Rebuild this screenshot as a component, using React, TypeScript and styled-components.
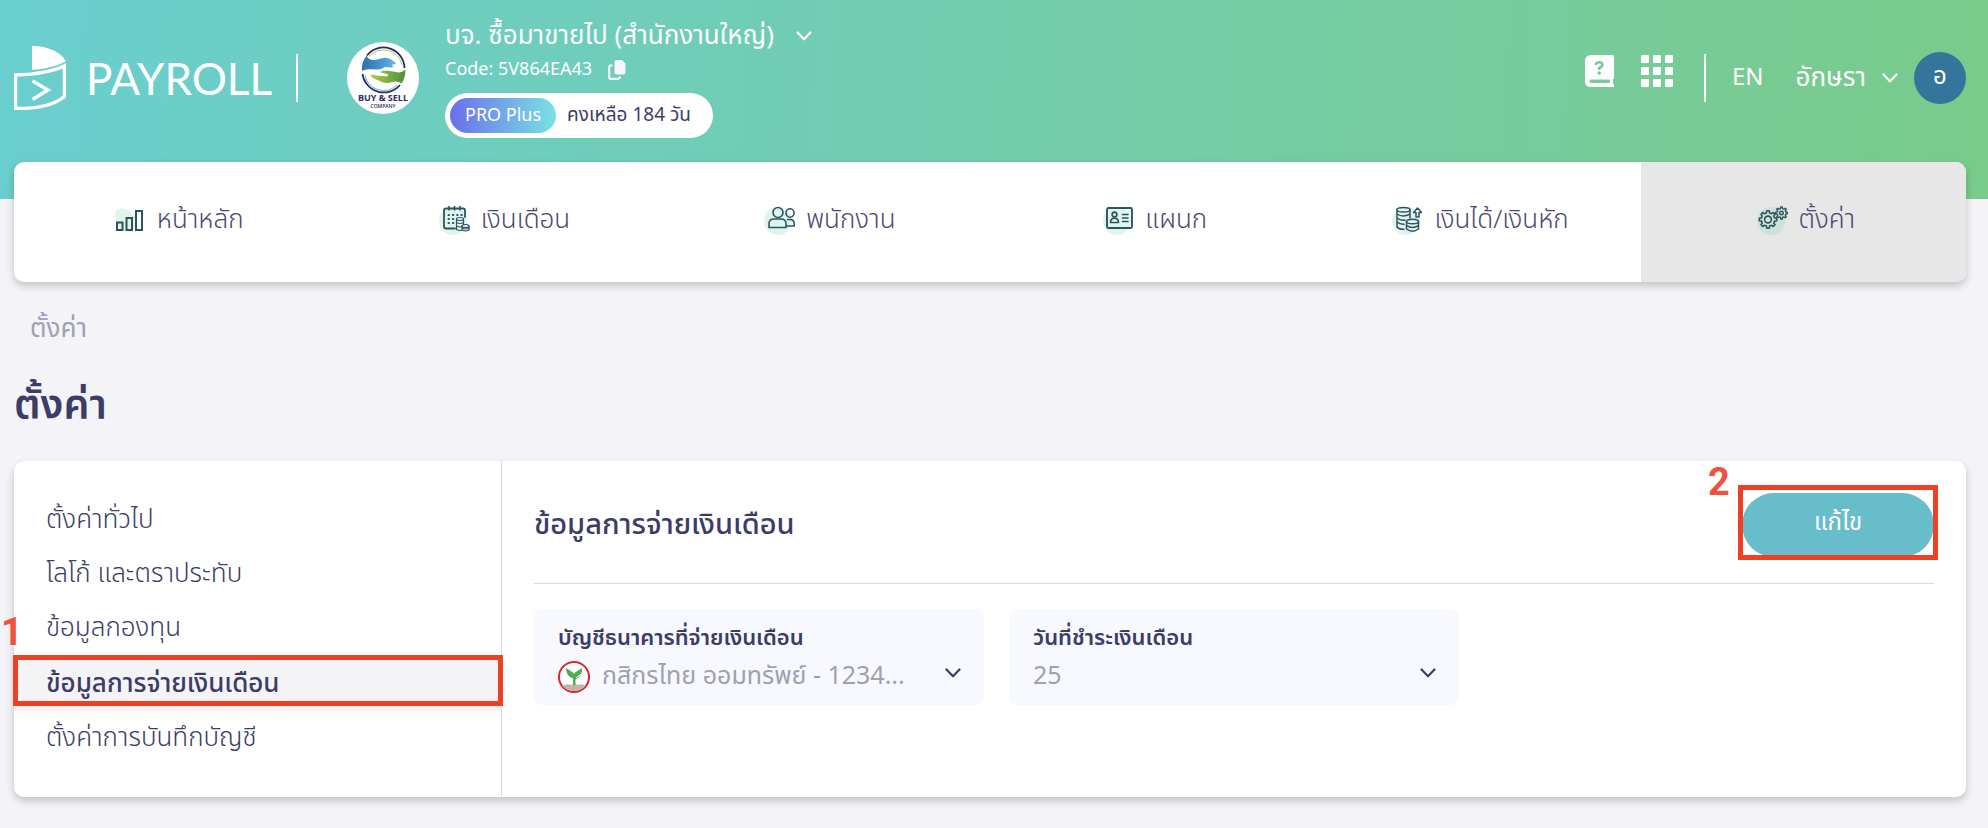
import React from "react";
import styled, { createGlobalStyle, css } from "styled-components";

const fontStack = `"Noto Sans Thai", "Noto Sans", sans-serif`;

const GlobalStyle = createGlobalStyle`
  *, *::before, *::after { box-sizing: border-box; }
  body {
    margin: 0;
    background: #f3f3f8;
    color: #3c3c66;
    font-family: ${fontStack};
    font-size: 24px;
    font-weight: 400;
  }
  button, select { font: inherit; color: inherit; }
  h1, h2, p { margin: 0; }
`;

const Page = styled.div`
  padding-bottom: 31px;
`;

const Header = styled.header`
  display: flex;
  align-items: flex-start;
  height: 199px;
  padding: 0 22px 0 14px;
  color: #fff;
  background: linear-gradient(94deg, #6bcecf 0%, #6fcdb9 32%, #79cb8b 100%);
`;

const Brand = styled.a`
  display: flex;
  align-items: center;
  gap: 20px;
  height: 64px;
  margin-top: 46px;
  color: inherit;
  text-decoration: none;
`;

const Wordmark = styled.span`
  width: 190px;
  font-family: Lato, sans-serif;
  font-size: 44px;
  font-weight: 400;
  line-height: 64px;
`;

const Rule = styled.span`
  flex: none;
  width: 2px;
  height: 48px;
  background: #fff;
`;

const ToolRule = styled(Rule)`
  margin-left: 31px;
`;

const CompanyLogo = styled.svg`
  flex: none;
  width: 72px;
  height: 72px;
  margin: 42px 26px 0 49px;
`;

const Company = styled.div`
  display: flex;
  flex-direction: column;
  align-items: flex-start;
  padding-top: 16px;
`;

const PlainButton = styled.button`
  display: flex;
  align-items: center;
  padding: 0;
  border: 0;
  background: none;
  cursor: pointer;
`;

const CompanyButton = styled(PlainButton)`
  gap: 22px;
  height: 40px;
  font-size: 26px;
  line-height: 40px;
`;

const CodeRow = styled.div`
  display: flex;
  align-items: center;
  gap: 16px;
  height: 28px;
  font-size: 18px;
  line-height: 30px;
`;

const Plan = styled.div`
  display: flex;
  align-items: center;
  gap: 11px;
  height: 45px;
  margin-top: 9px;
  padding: 5px 22px 5px 5px;
  border-radius: 23px;
  background: #fff;
  color: #3c3c66;
  font-size: 19px;
  line-height: 35px;
`;

const PlanName = styled.span`
  padding: 0 15px;
  border-radius: 18px;
  background: linear-gradient(90deg, #6b6eec, #79e2e4);
  color: #fff;
  font-size: 18px;
`;

const Tools = styled.div`
  display: flex;
  align-items: center;
  height: 52px;
  margin: 52px 0 0 auto;
`;

const ToolButton = styled(PlainButton)`
  align-self: flex-start;
  margin: 3px 0 0 27px;
`;

const LangButton = styled(PlainButton)`
  margin-left: 26px;
`;

const UserButton = styled(PlainButton)`
  gap: 16px;
  margin-left: 32px;
  font-size: 26px;
`;

const Avatar = styled.span`
  width: 52px;
  height: 52px;
  border-radius: 50%;
  background: #35749b;
  font-size: 24px;
  line-height: 50px;
  text-align: center;
`;

const card = css`
  border-radius: 10px;
  background: #fff;
  box-shadow: 0 4px 8px rgba(0, 0, 0, 0.2);
`;

const Nav = styled.nav`
  ${card}
  position: relative;
  display: grid;
  grid-template-columns: repeat(6, 1fr);
  height: 120px;
  margin: -37px 22px 0 14px;
  overflow: hidden;
`;

const NavLink = styled.a<{ $active?: boolean }>`
  display: flex;
  align-items: center;
  justify-content: center;
  gap: 11px;
  padding: 0 0 4px 4px;
  background: ${(p) => (p.$active ? "#e7e7e7" : "transparent")};
  color: #4a4872;
  font-size: 26px;
  font-weight: 300;
  text-decoration: none;
  line-height: 40px;

  svg { flex: none; }
`;

const Crumb = styled.nav`
  padding: 27px 30px 0;
  font-size: 26px;
  line-height: 40px;

  a { color: #a09fb4; text-decoration: none; }
`;

const Title = styled.h1`
  padding: 30px 14px 0;
  font-size: 41px;
  font-weight: 600;
  line-height: 54px;
`;

const Panel = styled.main`
  ${card}
  display: grid;
  grid-template-columns: 1fr 3fr;
  min-height: 336px;
  margin: 28px 22px 0 14px;
`;

const Side = styled.nav`
  display: flex;
  flex-direction: column;
  padding: 32px 0;
  border-right: 1px solid #d9d9e6;
`;

const SideLink = styled.a<{ $active?: boolean }>`
  position: relative;
  height: ${(p) => (p.$active ? 56 : 54)}px;
  padding-left: 32px;
  background: ${(p) => (p.$active ? "#f4f4f7" : "transparent")};
  color: inherit;
  font-size: 26px;
  font-weight: ${(p) => (p.$active ? 500 : 300)};
  line-height: ${(p) => (p.$active ? 58 : 54)}px;
  text-decoration: none;
`;

const SideMark = styled.span`
  position: absolute;
  inset: 0 -2px 5px -1px;
  border: 5px solid #ec4125;
`;

const StepNumber = styled.span`
  position: absolute;
  color: #ef5340;
  font-family: Roboto, Arial, sans-serif;
  font-size: 38px;
  font-weight: 700;
  line-height: 38px;
`;

const StepOne = styled(StepNumber)`
  top: -42px;
  left: -13px;
`;

const StepTwo = styled(StepNumber)`
  top: -30px;
  left: -34px;
`;

const Content = styled.section`
  padding: 32px 32px 92px;
`;

const ContentHead = styled.div`
  display: flex;
  align-items: center;
  justify-content: space-between;
  height: 91px;
  padding-bottom: 27px;
  border-bottom: 1px solid #d9d9e6;
`;

const SectionTitle = styled.h2`
  font-size: 29px;
  font-weight: 500;
  line-height: 40px;
`;

const EditWrap = styled.div`
  position: relative;
`;

const EditButton = styled.button`
  display: block;
  width: 192px;
  height: 64px;
  padding: 0 0 3px;
  border: 0;
  border-radius: 32px;
  background: #67bdc9;
  color: #fff;
  font-size: 24px;
  cursor: pointer;
`;

const EditMark = styled.span`
  position: absolute;
  inset: -8px -4px -3px;
  border: 5px solid #ec4125;
  pointer-events: none;
`;

const Fields = styled.div`
  display: grid;
  grid-template-columns: repeat(3, 1fr);
  gap: 25px;
  margin-top: 25px;
`;

const Field = styled.div`
  height: 96px;
  padding: 12px 23px 0 24px;
  border-radius: 8px;
  background: #f8f9fe;
`;

const FieldLabel = styled.label`
  display: block;
  font-size: 22px;
  font-weight: 600;
  line-height: 36px;
`;

const FieldRow = styled.div`
  display: flex;
  align-items: center;
  gap: 12px;
  height: 40px;

  > svg:last-child { margin-bottom: 8px; }
`;

const Select = styled.select`
  flex: 1;
  min-width: 0;
  height: 40px;
  padding: 0 0 2px;
  border: 0;
  appearance: none;
  background: transparent;
  color: #a09fb4;
  font-size: 25px;
  line-height: 38px;
`;

const Chevron = () => (
  <svg width="16" height="10" viewBox="0 0 16 10" fill="none" stroke="currentColor" strokeWidth="2.2" strokeLinecap="round" strokeLinejoin="round" aria-hidden="true">
    <path d="M1.5 1.5 8 8.3l6.5-6.8" />
  </svg>
);

const BrandMark = () => (
  <svg width="52" height="64" viewBox="14 46 52 64" aria-hidden="true">
    <path d="M32 46C48 46 61 52 66 61.500Q52 68.500 32 70Z" fill="#fff" />
    <path d="M15.500 75Q48 74 64.500 65.700V96.500Q50 108.800 15.500 108.500Z" fill="none" stroke="#fff" strokeWidth="3.400" />
    <path d="M32.500 81 48 90 32.500 99.500" fill="none" stroke="#fff" strokeWidth="3.400" />
  </svg>
);

const BuySell = () => (
  <CompanyLogo viewBox="0 0 72 72" role="img" aria-label="Buy & Sell Company">
    <defs>
      <linearGradient id="blueHand"><stop stopColor="#2c6eb0" /><stop offset="1" stopColor="#5fb5e6" /></linearGradient>
      <linearGradient id="greenHand"><stop stopColor="#a9cc4e" /><stop offset="1" stopColor="#4f8f3a" /></linearGradient>
    </defs>
    <circle cx="36" cy="36" r="36" fill="#fff" />
    <path d="M20 13.500A21 21 0 0 1 57.500 26" fill="none" stroke="#2b2a63" strokeWidth="1.800" />
    <path d="M15.500 32A21.500 21.500 0 0 0 53 43" fill="none" stroke="#2b2a63" strokeWidth="1.800" />
    <path d="M22 14.500A19 19 0 0 1 55 23" fill="none" stroke="#a8cf62" strokeWidth="1" />
    <path d="M18 33A19 19 0 0 0 50 43" fill="none" stroke="#62b4e4" strokeWidth="1" />
    <path d="M19.500 13.500C21 17 24 18.500 28 18L36 16Q40 15 44 17.500L49 21Q48 23 44.500 22.500 48 25 44 25.500L38 25Q34 28 28 27.500C22 27 17 27.500 15 29Q14 21 19.500 13.500Z" fill="url(#blueHand)" />
    <path d="M58.500 27.500C54 31.500 50 30.500 46 29.500L39 28.500Q34 28.500 33.500 30.500L40 32Q43 33.500 39 34.500L30 33.500 24 32.500Q23.500 35 28 37L36 40.500Q41 41.500 45 40 50 38.500 54.500 41.500Q58.500 36 58.500 27.500Z" fill="url(#greenHand)" />
    <text x="36" y="59" textAnchor="middle" fill="#2b2a63" fontFamily="Open Sans, sans-serif" fontWeight="700" fontSize="9">BUY &amp; SELL</text>
    <text x="36" y="65.500" textAnchor="middle" fill="#2b2a63" fontFamily="Open Sans, sans-serif" fontWeight="600" fontSize="5">COMPANY</text>
  </CompanyLogo>
);

const CopyIcon = () => (
  <svg width="18" height="20" viewBox="0 0 18 20" aria-hidden="true">
    <path d="M8.500 0H14l3.500 3.500V12.500a2 2 0 0 1-2 2h-7a2 2 0 0 1-2-2V2a2 2 0 0 1 2-2Z" fill="#f4f6f8" />
    <path d="M4.500 5.500H3A1.500 1.500 0 0 0 1.200 7V17A1.500 1.500 0 0 0 3 18.800H10A1.500 1.500 0 0 0 11.700 17V16.200" fill="none" stroke="#f4f6f8" strokeWidth="2.200" />
  </svg>
);

const BookIcon = () => (
  <svg width="29" height="32" viewBox="0 0 29 32" aria-hidden="true">
    <path fill="#fff" fillRule="evenodd" d="M6 0H27.500Q29 0 29 1.500V22.500Q29 24 28 24.300V28.500Q29 28.800 29 30V32H6Q0 32 0 26V6Q0 0 6 0ZM6 24.500Q4.500 24.500 4.500 26.200T6 28H25V24.500Z" />
    <path d="M10.800 10Q11 7.300 14.300 7.300 17.300 7.300 17.300 10 17.300 12 14.200 13V15" fill="none" stroke="#77cb98" strokeWidth="2.600" />
    <circle cx="14.200" cy="18" r="1.800" fill="#77cb98" />
  </svg>
);

const GridIcon = () => (
  <svg width="32" height="32" viewBox="0 0 32 32" fill="#fff" aria-hidden="true">
    {[0, 12, 24].map((y) => [0, 12, 24].map((x) => <rect key={`${x}-${y}`} x={x} y={y} width="8" height="8" rx="1" />))}
  </svg>
);

const Glyph = ({ children, blob = true }: { children: React.ReactNode; blob?: boolean }) => (
  <svg width="32" height="30" viewBox="0 0 32 30" fill="none" stroke="#2d5560" strokeWidth="1.600" strokeLinejoin="round" strokeLinecap="round" aria-hidden="true">
    <defs>
      <linearGradient id="blob" x1="0" x2="1"><stop stopColor="#7acb8a" /><stop offset="1" stopColor="#67cfd6" /></linearGradient>
    </defs>
    {blob && <circle cx="15" cy="16" r="14" fill="url(#blob)" fillOpacity="0.220" stroke="none" />}
    {children}
  </svg>
);

const HomeGlyph = () => (
  <Glyph blob={false}>
    <path d="M1 10C1 5 5 3 9 3.500 15 4 17 9 20 11 25 15 22 27 15 27 6 27 1 20 1 10Z" fill="#7acb8a" fillOpacity="0.220" stroke="none" />
    <path d="M3 17.500H8.500V25H3ZM12.500 13H18V25H12.500ZM22 6H28V25H22Z" strokeWidth="2" strokeLinejoin="miter" />
  </Glyph>
);

const CalendarGlyph = () => (
  <Glyph>
    <path d="M17 23.500H8Q6 23.500 6 21.500V5.500Q6 3.500 8 3.500H25Q27 3.500 27 5.500V12" strokeWidth="1.800" />
    <path d="M11 1.500V5M16.500 1.500V5M22 1.500V5" />
    <path d="M10.500 10H24M10.500 14H18M10.500 18H17" strokeDasharray="0.500 3.800" strokeWidth="2" />
    <g fill="#e8f5f3" strokeWidth="1.200">
      <path d="M18.500 14V24.500Q22 26.500 25.500 24.500V14" />
      <ellipse cx="22" cy="14" rx="3.600" ry="1.500" />
      <path d="M18.500 17.500Q22 19.500 25.500 17.500M18.500 21Q22 23 25.500 21" />
      <path d="M24 21V25Q27.500 27 31 25V21" />
      <ellipse cx="27.500" cy="21" rx="3.500" ry="1.500" />
      <path d="M24 23Q27.500 25 31 23" />
    </g>
  </Glyph>
);

const UsersGlyph = () => (
  <Glyph>
    <ellipse cx="15" cy="7.500" rx="5" ry="5" />
    <path d="M6 22.500V19Q6 14 11 14H18Q23 14 23 19V22.500Z" />
    <ellipse cx="27" cy="8" rx="4" ry="4.200" />
    <path d="M24.500 14.500H28Q31.200 15 31.200 19V21H23.500" />
  </Glyph>
);

const CardGlyph = () => (
  <Glyph>
    <rect x="5" y="3" width="25" height="20" rx="1.500" strokeWidth="1.900" />
    <circle cx="12.500" cy="9.500" r="2.400" />
    <path d="M8.500 17.500Q8.500 13.200 12.500 13.200T16.500 17.500ZM20.500 9.500H26M20.500 13H26M20.500 16.500H26" />
  </Glyph>
);

const CoinsGlyph = () => (
  <Glyph>
    <g strokeWidth="1.500">
      <ellipse cx="12.500" cy="4.800" rx="6.500" ry="2.300" />
      <path d="M6 5V22Q8 24.500 13 24.300M19 5V13M6 9Q12 13 19 9M6 13Q10 16 14 15M6 17Q9 19.500 13 19.300" />
      <ellipse cx="21.500" cy="16.500" rx="6" ry="2.300" />
      <path d="M15.500 16.500V24Q21.500 28.500 27.500 24V16.500M15.500 20.300Q21.500 24.500 27.500 20.300" />
      <path d="M25 12V7.500H22.500L26.500 3 30.500 7.500H28V12Z" />
    </g>
  </Glyph>
);

const gearPath = (cx: number, cy: number, r: number, tooth: number, teeth: number) => {
  const pts: string[] = [];
  for (let i = 0; i < teeth; i++) {
    [[-0.3, r], [-0.17, r + tooth], [0.17, r + tooth], [0.3, r]].forEach(([t, radius]) => {
      const a = ((i + t) / teeth) * Math.PI * 2;
      pts.push(`${(cx + Math.cos(a) * radius).toFixed(1)} ${(cy + Math.sin(a) * radius).toFixed(1)}`);
    });
  }
  return `M${pts.join("L")}Z`;
};

const GearsGlyph = () => (
  <Glyph>
    <path d={gearPath(12, 14.5, 6.8, 2, 8)} />
    <circle cx="12" cy="14.500" r="3.400" />
    <path d={gearPath(25.5, 8, 4.4, 1.7, 8)} strokeWidth="1.400" />
    <circle cx="25.500" cy="8" r="1.800" strokeWidth="1.400" />
  </Glyph>
);

const BankIcon = () => (
  <svg width="32" height="32" viewBox="0 0 32 32" aria-hidden="true">
    <circle cx="16" cy="16" r="15" fill="#fff" stroke="#d9272e" strokeWidth="2" />
    <path d="M4.500 25Q9 22 13 24L16 22.500 20 24Q24 22 27.500 25 23 30 16 30T4.500 25Z" fill="#bdb5ad" />
    <path d="M15 24V17.500Q8 15 8 7L15 11.500Q16 14 17 11.500L24 7Q24.500 16 17.500 18.500V24Z" fill="#4caf50" />
    <path d="M18 17 24 12.500" stroke="#fff" strokeWidth="1" />
  </svg>
);

const navItems = [
  { label: "หน้าหลัก", icon: <HomeGlyph /> },
  { label: "เงินเดือน", icon: <CalendarGlyph /> },
  { label: "พนักงาน", icon: <UsersGlyph /> },
  { label: "แผนก", icon: <CardGlyph /> },
  { label: "เงินได้/เงินหัก", icon: <CoinsGlyph /> },
  { label: "ตั้งค่า", icon: <GearsGlyph />, active: true },
];

const sideItems = [
  { label: "ตั้งค่าทั่วไป" },
  { label: "โลโก้ และตราประทับ" },
  { label: "ข้อมูลกองทุน" },
  { label: "ข้อมูลการจ่ายเงินเดือน", active: true },
  { label: "ตั้งค่าการบันทึกบัญชี" },
];

export default function App() {
  return (
    <Page>
      <GlobalStyle />
      <Header>
        <Brand href="#">
          <BrandMark />
          <Wordmark>PAYROLL</Wordmark>
          <Rule />
        </Brand>
        <BuySell />
        <Company>
          <CompanyButton type="button">
            บจ. ซื้อมาขายไป (สำนักงานใหญ่)
            <Chevron />
          </CompanyButton>
          <CodeRow>
            Code: 5V864EA43
            <PlainButton type="button" aria-label="Copy code"><CopyIcon /></PlainButton>
          </CodeRow>
          <Plan>
            <PlanName>PRO Plus</PlanName>
            คงเหลือ 184 วัน
          </Plan>
        </Company>
        <Tools>
          <ToolButton type="button" aria-label="Help"><BookIcon /></ToolButton>
          <ToolButton type="button" aria-label="Apps"><GridIcon /></ToolButton>
          <ToolRule />
          <LangButton type="button">EN</LangButton>
          <UserButton type="button">
            อักษรา
            <Chevron />
            <Avatar>อ</Avatar>
          </UserButton>
        </Tools>
      </Header>
      <Nav>
        {navItems.map((item) => (
          <NavLink key={item.label} href="#" $active={item.active}>
            {item.icon}
            {item.label}
          </NavLink>
        ))}
      </Nav>
      <Crumb><a href="#">ตั้งค่า</a></Crumb>
      <Title>ตั้งค่า</Title>
      <Panel>
        <Side>
          {sideItems.map((item) => (
            <SideLink key={item.label} href="#" $active={item.active}>
              {item.label}
              {item.active && (
                <>
                  <SideMark />
                  <StepOne>1</StepOne>
                </>
              )}
            </SideLink>
          ))}
        </Side>
        <Content>
          <ContentHead>
            <SectionTitle>ข้อมูลการจ่ายเงินเดือน</SectionTitle>
            <EditWrap>
              <EditButton type="button">แก้ไข</EditButton>
              <EditMark />
              <StepTwo>2</StepTwo>
            </EditWrap>
          </ContentHead>
          <Fields>
            <Field>
              <FieldLabel htmlFor="bank">บัญชีธนาคารที่จ่ายเงินเดือน</FieldLabel>
              <FieldRow>
                <BankIcon />
                <Select id="bank"><option>กสิกรไทย ออมทรัพย์ - 1234...</option></Select>
                <Chevron />
              </FieldRow>
            </Field>
            <Field>
              <FieldLabel htmlFor="payday">วันที่ชำระเงินเดือน</FieldLabel>
              <FieldRow>
                <Select id="payday"><option>25</option></Select>
                <Chevron />
              </FieldRow>
            </Field>
          </Fields>
        </Content>
      </Panel>
    </Page>
  );
}
